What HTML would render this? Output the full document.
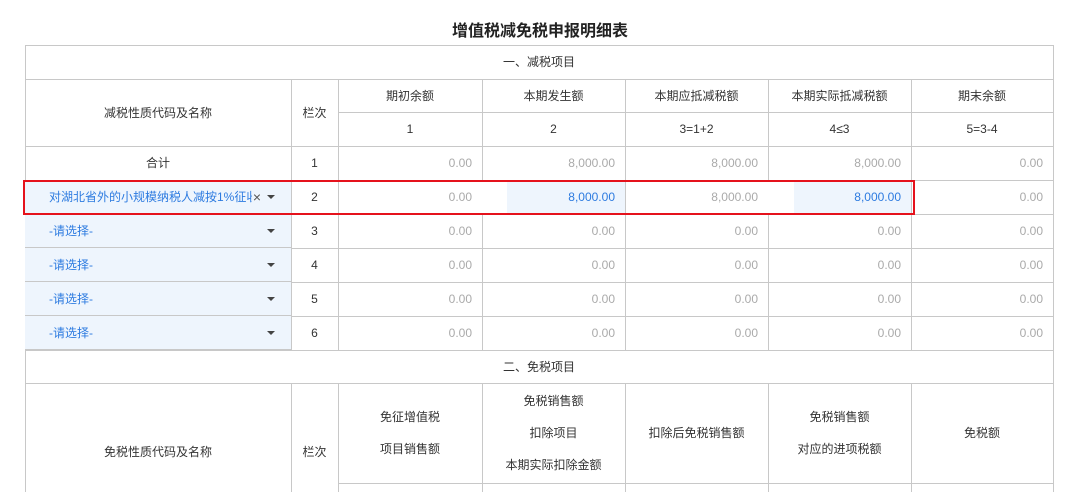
<!DOCTYPE html>
<html style="height:492px;overflow:hidden"><head><meta charset="utf-8"><style>
html,body{margin:0;width:1080px;height:492px;overflow:hidden}
body{background:#fff;font-family:"Liberation Sans","Noto Sans CJK SC",sans-serif;font-size:12px;color:#333;position:relative}
.c{position:absolute;box-sizing:border-box;border-right:1px solid #c8c8c8;border-bottom:1px solid #c8c8c8;display:flex;align-items:center;justify-content:center;text-align:center;line-height:32px}
.r{justify-content:flex-end;padding-right:10px;color:#aaa}
.h{position:absolute;height:1px;background:#c8c8c8}
.b{background:#eef5fd}
.sel{justify-content:flex-start;padding-left:24px;color:#2d7be0}
.ar{position:absolute;right:16px;top:15px;width:0;height:0;border-left:4px solid transparent;border-right:4px solid transparent;border-top:4px solid #444}
</style></head><body>
<div style="position:absolute;top:17px;left:0;width:1080px;text-align:center;font-size:16px;font-weight:bold;color:#222">增值税减免税申报明细表</div>
<div style="position:absolute;left:25px;top:45px;width:1029px;height:447px;border-left:1px solid #c8c8c8;border-top:1px solid #c8c8c8;box-sizing:border-box"></div>
<div class="c" style="left:25px;top:45px;width:1029px;height:35px">一、减税项目</div>
<div class="c" style="left:25px;top:79px;width:267px;height:68px">减税性质代码及名称</div>
<div class="c" style="left:291px;top:79px;width:48px;height:68px">栏次</div>
<div class="c" style="left:338px;top:79px;width:145px;height:34px">期初余额</div>
<div class="c" style="left:482px;top:79px;width:144px;height:34px">本期发生额</div>
<div class="c" style="left:625px;top:79px;width:144px;height:34px">本期应抵减税额</div>
<div class="c" style="left:768px;top:79px;width:144px;height:34px">本期实际抵减税额</div>
<div class="c" style="left:911px;top:79px;width:143px;height:34px">期末余额</div>
<div class="c" style="left:338px;top:112px;width:145px;height:35px">1</div>
<div class="c" style="left:482px;top:112px;width:144px;height:35px">2</div>
<div class="c" style="left:625px;top:112px;width:144px;height:35px">3=1+2</div>
<div class="c" style="left:768px;top:112px;width:144px;height:35px">4≤3</div>
<div class="c" style="left:911px;top:112px;width:143px;height:35px">5=3-4</div>

<div class="c" style="left:25px;top:146px;width:267px;height:35px">合计</div>
<div class="c" style="left:291px;top:146px;width:48px;height:35px">1</div>
<div class="c r" style="left:338px;top:146px;width:145px;height:35px">0.00</div>
<div class="c r" style="left:482px;top:146px;width:144px;height:35px">8,000.00</div>
<div class="c r" style="left:625px;top:146px;width:144px;height:35px">8,000.00</div>
<div class="c r" style="left:768px;top:146px;width:144px;height:35px">8,000.00</div>
<div class="c r" style="left:911px;top:146px;width:143px;height:35px">0.00</div>

<div class="c b sel" style="left:25px;top:180px;width:267px;height:35px;white-space:nowrap;overflow:hidden"><span style="display:inline-block;width:203px;overflow:hidden">对湖北省外的小规模纳税人减按1%征收率</span><span style="position:absolute;right:30px;color:#555;font-size:14px">×</span><i class="ar"></i></div>
<div class="c" style="left:291px;top:180px;width:48px;height:35px">2</div>
<div class="c r" style="left:338px;top:180px;width:145px;height:35px">0.00</div>
<div class="c r" style="left:482px;top:180px;width:144px;height:35px;background:linear-gradient(90deg,#fff 25px,#eef5fd 25px);color:#2d7be0">8,000.00</div>
<div class="c r" style="left:625px;top:180px;width:144px;height:35px">8,000.00</div>
<div class="c r" style="left:768px;top:180px;width:144px;height:35px;background:linear-gradient(90deg,#fff 26px,#eef5fd 26px);color:#2d7be0">8,000.00</div>
<div class="c r" style="left:911px;top:180px;width:143px;height:35px">0.00</div>

<div class="c b sel" style="left:25px;top:214px;width:267px;height:35px">-请选择-<i class="ar"></i></div>
<div class="c" style="left:291px;top:214px;width:48px;height:35px">3</div>
<div class="c r" style="left:338px;top:214px;width:145px;height:35px">0.00</div>
<div class="c r" style="left:482px;top:214px;width:144px;height:35px">0.00</div>
<div class="c r" style="left:625px;top:214px;width:144px;height:35px">0.00</div>
<div class="c r" style="left:768px;top:214px;width:144px;height:35px">0.00</div>
<div class="c r" style="left:911px;top:214px;width:143px;height:35px">0.00</div>

<div class="c b sel" style="left:25px;top:248px;width:267px;height:35px">-请选择-<i class="ar"></i></div>
<div class="c" style="left:291px;top:248px;width:48px;height:35px">4</div>
<div class="c r" style="left:338px;top:248px;width:145px;height:35px">0.00</div>
<div class="c r" style="left:482px;top:248px;width:144px;height:35px">0.00</div>
<div class="c r" style="left:625px;top:248px;width:144px;height:35px">0.00</div>
<div class="c r" style="left:768px;top:248px;width:144px;height:35px">0.00</div>
<div class="c r" style="left:911px;top:248px;width:143px;height:35px">0.00</div>

<div class="c b sel" style="left:25px;top:282px;width:267px;height:35px">-请选择-<i class="ar"></i></div>
<div class="c" style="left:291px;top:282px;width:48px;height:35px">5</div>
<div class="c r" style="left:338px;top:282px;width:145px;height:35px">0.00</div>
<div class="c r" style="left:482px;top:282px;width:144px;height:35px">0.00</div>
<div class="c r" style="left:625px;top:282px;width:144px;height:35px">0.00</div>
<div class="c r" style="left:768px;top:282px;width:144px;height:35px">0.00</div>
<div class="c r" style="left:911px;top:282px;width:143px;height:35px">0.00</div>

<div class="c b sel" style="left:25px;top:316px;width:267px;height:35px">-请选择-<i class="ar"></i></div>
<div class="c" style="left:291px;top:316px;width:48px;height:35px">6</div>
<div class="c r" style="left:338px;top:316px;width:145px;height:35px">0.00</div>
<div class="c r" style="left:482px;top:316px;width:144px;height:35px">0.00</div>
<div class="c r" style="left:625px;top:316px;width:144px;height:35px">0.00</div>
<div class="c r" style="left:768px;top:316px;width:144px;height:35px">0.00</div>
<div class="c r" style="left:911px;top:316px;width:143px;height:35px">0.00</div>

<div class="h" style="left:25px;top:247px;width:267px"></div>
<div class="h" style="left:25px;top:281px;width:267px"></div>
<div class="h" style="left:25px;top:315px;width:267px"></div>
<div class="h" style="left:25px;top:349px;width:267px"></div>

<div class="c" style="left:25px;top:350px;width:1029px;height:34px">二、免税项目</div>
<div class="c" style="left:25px;top:383px;width:267px;height:109px;border-bottom:0;align-items:flex-start;padding-top:53px">免税性质代码及名称</div>
<div class="c" style="left:291px;top:383px;width:48px;height:109px;border-bottom:0;align-items:flex-start;padding-top:53px">栏次</div>
<div class="c" style="left:338px;top:383px;width:145px;height:101px;line-height:32px">免征增值税<br>项目销售额</div>
<div class="c" style="left:482px;top:383px;width:144px;height:101px;line-height:32px">免税销售额<br>扣除项目<br>本期实际扣除金额</div>
<div class="c" style="left:625px;top:383px;width:144px;height:101px">扣除后免税销售额</div>
<div class="c" style="left:768px;top:383px;width:144px;height:101px;line-height:32px">免税销售额<br>对应的进项税额</div>
<div class="c" style="left:911px;top:383px;width:143px;height:101px">免税额</div>
<div style="position:absolute;left:482px;top:483px;width:1px;height:9px;background:#c8c8c8"></div>
<div style="position:absolute;left:625px;top:483px;width:1px;height:9px;background:#c8c8c8"></div>
<div style="position:absolute;left:768px;top:483px;width:1px;height:9px;background:#c8c8c8"></div>
<div style="position:absolute;left:911px;top:483px;width:1px;height:9px;background:#c8c8c8"></div>
<div style="position:absolute;left:1053px;top:483px;width:1px;height:9px;background:#c8c8c8"></div>

<div style="position:absolute;left:23px;top:180px;width:892px;height:35px;border:2px solid #e5121c;box-sizing:border-box"></div>
</body></html>
